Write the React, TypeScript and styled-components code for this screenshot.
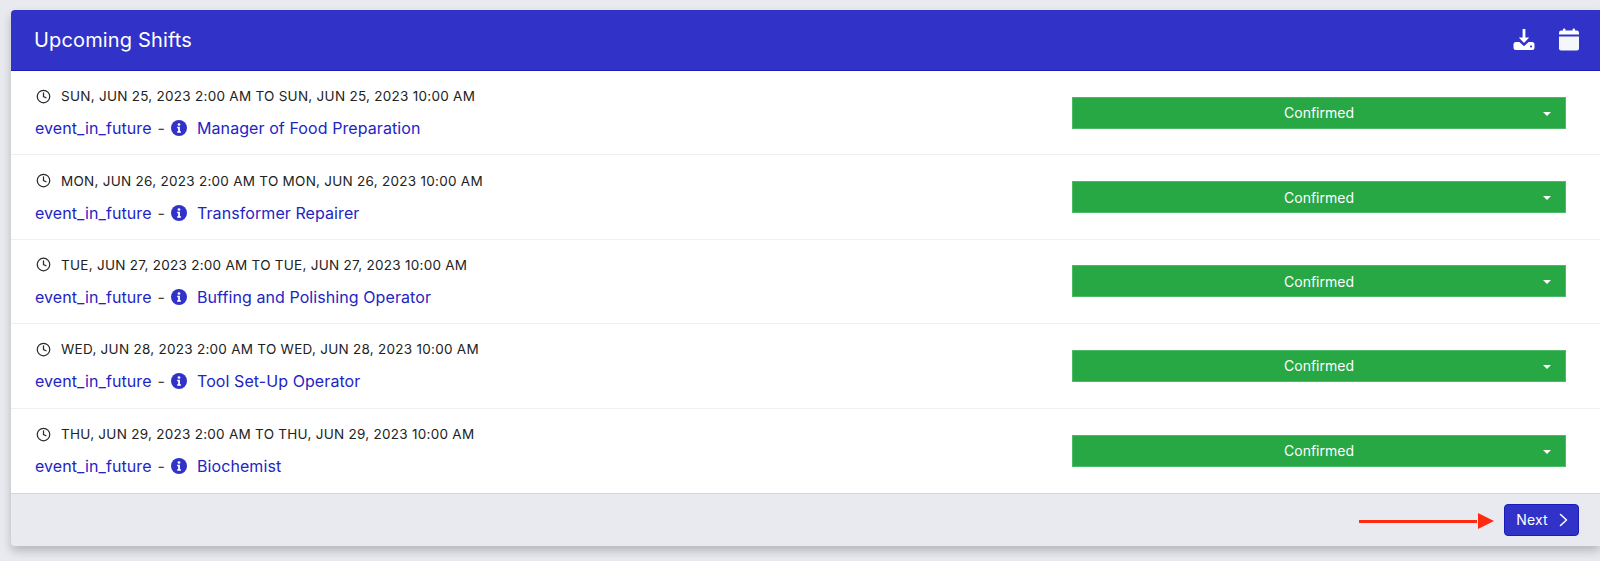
import React from "react";
import styled, { createGlobalStyle } from "styled-components";

const GlobalStyle = createGlobalStyle`
  html, body {
    margin: 0;
    padding: 0;
    background: #e9eaef;
    font-family: Inter, "Liberation Sans", sans-serif;
  }
`;

const shifts = [
  { date: "SUN, JUN 25, 2023 2:00 AM TO SUN, JUN 25, 2023 10:00 AM", title: "Manager of Food Preparation" },
  { date: "MON, JUN 26, 2023 2:00 AM TO MON, JUN 26, 2023 10:00 AM", title: "Transformer Repairer" },
  { date: "TUE, JUN 27, 2023 2:00 AM TO TUE, JUN 27, 2023 10:00 AM", title: "Buffing and Polishing Operator" },
  { date: "WED, JUN 28, 2023 2:00 AM TO WED, JUN 28, 2023 10:00 AM", title: "Tool Set-Up Operator" },
  { date: "THU, JUN 29, 2023 2:00 AM TO THU, JUN 29, 2023 10:00 AM", title: "Biochemist" },
];

const ClockIcon = () => (
  <svg width="15" height="15" viewBox="0 0 24 24" fill="none" stroke="#2b2b2b" strokeWidth="2" strokeLinecap="round">
    <circle cx="12" cy="12" r="10" />
    <path d="M12 6v6l4 2" />
  </svg>
);

const InfoIcon = () => (
  <svg width="16" height="16" viewBox="0 0 24 24">
    <circle cx="12" cy="12" r="12" fill="#3132c8" />
    <circle cx="12" cy="6.8" r="2" fill="#fff" />
    <path d="M9.2 10.2h4.2v6.6h1.5v2.2H9.2v-2.2h1.5v-4.4H9.2z" fill="#fff" />
  </svg>
);

const DownloadIcon = () => (
  <svg width="22" height="23" viewBox="0 0 22 23" fill="#fff">
    <path d="M9.6 1h2.8v8.4h3.8L11 15 5.8 9.4h3.8z" />
    <path d="M3 14h3.4l4.6 4.2 4.6-4.2H19a2.5 2.5 0 0 1 2.5 2.5v3A2.5 2.5 0 0 1 19 22H3a2.5 2.5 0 0 1-2.5-2.5v-3A2.5 2.5 0 0 1 3 14z" />
    <circle cx="18" cy="18.5" r="1.1" fill="#3132c8" />
  </svg>
);

const CalendarIcon = () => (
  <svg width="20" height="23" viewBox="0 0 20 23" fill="#fff">
    <rect x="4" y="0.5" width="2.4" height="4" rx="1" />
    <rect x="13.6" y="0.5" width="2.4" height="4" rx="1" />
    <path d="M2.4 2.5h15.2A2.4 2.4 0 0 1 20 4.9v1.6H0V4.9a2.4 2.4 0 0 1 2.4-2.4z" />
    <path d="M0 8.5h20v12a2 2 0 0 1-2 2H2a2 2 0 0 1-2-2z" fill="#f6f7fb" />
  </svg>
);

const ChevronIcon = () => (
  <svg width="9" height="14" viewBox="0 0 9 14" fill="none" stroke="#fff" strokeWidth="1.6" strokeLinecap="round" strokeLinejoin="round">
    <path d="M1.5 1.5L7.5 7l-6 5.5" />
  </svg>
);

function App() {
  return (
    <Page>
      <GlobalStyle />
      <Card>
        <Header>
          <Title>Upcoming Shifts</Title>
          <HeaderIcons>
            <DownloadIcon />
            <CalendarIcon />
          </HeaderIcons>
        </Header>
        <List>
          {shifts.map((shift) => (
            <Row key={shift.date}>
              <RowInfo>
                <DateLine>
                  <ClockIcon />
                  <span>{shift.date}</span>
                </DateLine>
                <EventLine>
                  <EventLink>event_in_future</EventLink>
                  <Dash>-</Dash>
                  <InfoIcon />
                  <EventLink>{shift.title}</EventLink>
                </EventLine>
              </RowInfo>
              <StatusButton>
                <span>Confirmed</span>
                <Caret />
              </StatusButton>
            </Row>
          ))}
        </List>
        <Footer>
          <ArrowLine />
          <ArrowHead />
          <NextButton>
            Next
            <ChevronIcon />
          </NextButton>
        </Footer>
      </Card>
    </Page>
  );
}

export default App;

const Page = styled.div`
  height: 561px;
  box-sizing: border-box;
  padding: 10px 0 15px 11px;
  overflow: hidden;
`;

const Card = styled.div`
  height: 536px;
  display: flex;
  flex-direction: column;
  border-radius: 4px 0 0 4px;
  background: #e9eaef;
  box-shadow: 0 5px 10px rgba(0, 0, 0, 0.22);
  overflow: hidden;
`;

const Header = styled.header`
  height: 61px;
  flex-shrink: 0;
  box-sizing: border-box;
  display: flex;
  align-items: center;
  justify-content: space-between;
  padding: 0 21px 1px 23px;
  background: #3132c8;
  border-bottom: 1px solid #1a1bb8;
`;

const Title = styled.h1`
  margin: 0;
  font-size: 20px;
  font-weight: 400;
  letter-spacing: 0.15px;
  color: #fff;
`;

const HeaderIcons = styled.div`
  display: flex;
  align-items: center;
  gap: 24px;
`;

const List = styled.div`
  background: #fff;
  border-bottom: 1px solid #d4d5da;
`;

const Row = styled.div`
  height: 84.4px;
  box-sizing: border-box;
  display: flex;
  align-items: center;
  justify-content: space-between;
  padding: 0 34px 0 24px;
  border-bottom: 1px solid #eeeff1;

  &:last-child {
    border-bottom: none;
  }
`;

const RowInfo = styled.div`
  display: flex;
  flex-direction: column;
  gap: 13px;
`;

const DateLine = styled.div`
  display: flex;
  align-items: center;
  gap: 10px;
  padding-left: 1px;
  font-size: 13.5px;
  line-height: 18px;
  letter-spacing: 0.27px;
  color: #222;
`;

const EventLine = styled.div`
  display: flex;
  align-items: center;
  font-size: 16px;
  line-height: 20px;
  color: #2324c4;
  letter-spacing: 0.08px;

  svg {
    margin-right: 10px;
  }
`;

const EventLink = styled.a`
  color: #2324c4;
`;

const Dash = styled.span`
  margin: 0 6px;
  color: #444;
`;

const StatusButton = styled.div`
  position: relative;
  width: 494px;
  height: 32px;
  box-sizing: border-box;
  display: flex;
  align-items: center;
  justify-content: center;
  background: #28a745;
  border: 1px solid #4dbb66;
  font-size: 14px;
  color: #fff;
`;

const Caret = styled.i`
  position: absolute;
  right: 14px;
  top: 14px;
  border-left: 4px solid transparent;
  border-right: 4px solid transparent;
  border-top: 4px solid #fff;
`;

const Footer = styled.footer`
  position: relative;
  flex: 1;
  display: flex;
  align-items: center;
  justify-content: flex-end;
  padding-right: 21px;
`;

const ArrowLine = styled.div`
  position: absolute;
  right: 123px;
  top: 26px;
  width: 118px;
  height: 3px;
  background: #ff2a10;
`;

const ArrowHead = styled.div`
  position: absolute;
  right: 106px;
  top: 19px;
  border-top: 8px solid transparent;
  border-bottom: 8px solid transparent;
  border-left: 16px solid #ff2a10;
`;

const NextButton = styled.button`
  width: 75px;
  height: 32px;
  display: flex;
  align-items: center;
  justify-content: center;
  gap: 11px;
  padding: 0 0 0 1px;
  background: #3132c8;
  border: 1px solid #1a1bb8;
  border-radius: 4px;
  color: #fff;
  font-family: inherit;
  font-size: 14px;
  letter-spacing: 0.2px;
`;
